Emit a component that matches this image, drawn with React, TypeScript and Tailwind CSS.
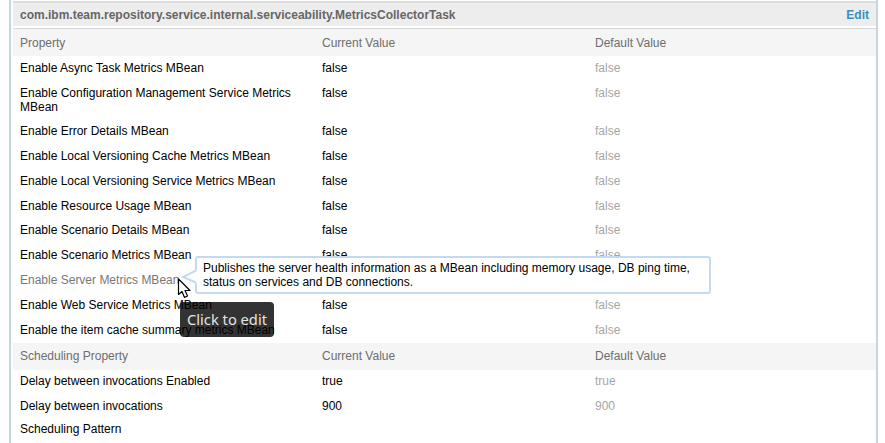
const metricRows = [
  { name: "Enable Async Task Metrics MBean", current: "false", def: "false" },
  { name: "Enable Configuration Management Service Metrics MBean", current: "false", def: "false", tall: true },
  { name: "Enable Error Details MBean", current: "false", def: "false" },
  { name: "Enable Local Versioning Cache Metrics MBean", current: "false", def: "false" },
  { name: "Enable Local Versioning Service Metrics MBean", current: "false", def: "false" },
  { name: "Enable Resource Usage MBean", current: "false", def: "false" },
  { name: "Enable Scenario Details MBean", current: "false", def: "false" },
  { name: "Enable Scenario Metrics MBean", current: "false", def: "false" },
  { name: "Enable Server Metrics MBean", current: "false", def: "false", hovered: true },
  { name: "Enable Web Service Metrics MBean", current: "false", def: "false" },
  { name: "Enable the item cache summary metrics MBean", current: "false", def: "false" },
];

const schedulingRows = [
  { name: "Delay between invocations Enabled", current: "true", def: "true" },
  { name: "Delay between invocations", current: "900", def: "900" },
];

const HeadRow = ({ title }: { title: string }) => (
  <div className="flex h-[27px] items-center bg-[#f5f5f5] text-[#6e6e6e]">
    <div className="w-[309px] pl-[7px]">{title}</div>
    <div className="w-[273px]">Current Value</div>
    <div>Default Value</div>
  </div>
);

const Row = ({ name, current, def, tall, hovered }: { name: string; current: string; def: string; tall?: boolean; hovered?: boolean }) => (
  <div className={tall ? "flex h-[38px] pt-[5px] leading-[14px]" : "flex h-[24.875px] pt-[5px] leading-[14px]"}>
    <div className={hovered ? "w-[309px] pl-[7px] pr-[14px] text-[#777777]" : "w-[309px] pl-[7px] pr-[14px] text-black"}>{name}</div>
    <div className="w-[273px] text-black">{current}</div>
    <div className="text-[#a6a6a6]">{def}</div>
  </div>
);

export default function App() {
  return (
    <div className="relative h-[443px] w-[885px] overflow-hidden bg-white font-['Liberation_Sans',Arial,sans-serif] text-[12px]">
      <div className="ml-[9px] h-full w-[869px] border-x-2 border-[#c5d5df] pl-[2px] pt-[1px]">
        <div className="w-[863px] border-t-2 border-[#dcdcdc]">
          <div className="flex h-[25px] items-center justify-between border-b-2 border-[#fff] bg-[#ededed] pl-[7px] pr-[7px] font-bold text-[#666666]">
            <span>com.ibm.team.repository.service.internal.serviceability.MetricsCollectorTask</span>
            <span className="text-[#3a8fc0]">Edit</span>
          </div>
          <div className="h-[1px] bg-[#d6d6d6]" />
          <HeadRow title="Property" />
          {metricRows.map((row, index) => (
            <Row key={index} {...row} />
          ))}
          <HeadRow title="Scheduling Property" />
          <div className="-mt-[1px]">
            {schedulingRows.map((row, index) => (
              <Row key={index} {...row} />
            ))}
          </div>
          <div className="flex h-[24px] pl-[7px] pt-[3px] leading-[14px] text-black">Scheduling Pattern</div>
        </div>
      </div>

      {/* hover tooltip with its pointer */}
      <div className="absolute left-[195px] top-[256px] h-[38px] w-[516px] rounded-[3px] border-2 border-[#c4daf0] bg-white pl-[6px] pt-[3px] leading-[14px] text-black">
        Publishes the server health information as a MBean including memory usage, DB ping time,
        <br />
        status on services and DB connections.
      </div>
      <svg className="absolute left-[181px] top-[269px]" width="17" height="16" viewBox="0 0 17 16">
        <path d="M16 1 L2 8 L16 14" fill="#ffffff" stroke="#c4daf0" strokeWidth="2" />
        <rect x="15.5" y="1" width="2" height="14" fill="#ffffff" />
      </svg>

      <div className="absolute left-[180px] top-[302px] flex h-[35px] w-[94px] items-center justify-center rounded-[4px] bg-black/80 font-['Noto_Sans',sans-serif] text-[14.7px] text-[#e4e4e4]">
        Click to edit
      </div>

      <svg className="absolute left-[177px] top-[278px]" width="15" height="21" viewBox="0 0 15 21">
        <path d="M1.5 1 L1.5 16.5 L5 13.5 L7.5 19.5 L10.5 18 L8 12.5 L13 12.5 Z" fill="#ffffff" stroke="#000000" strokeWidth="1.2" strokeLinejoin="round" />
      </svg>
    </div>
  );
}
